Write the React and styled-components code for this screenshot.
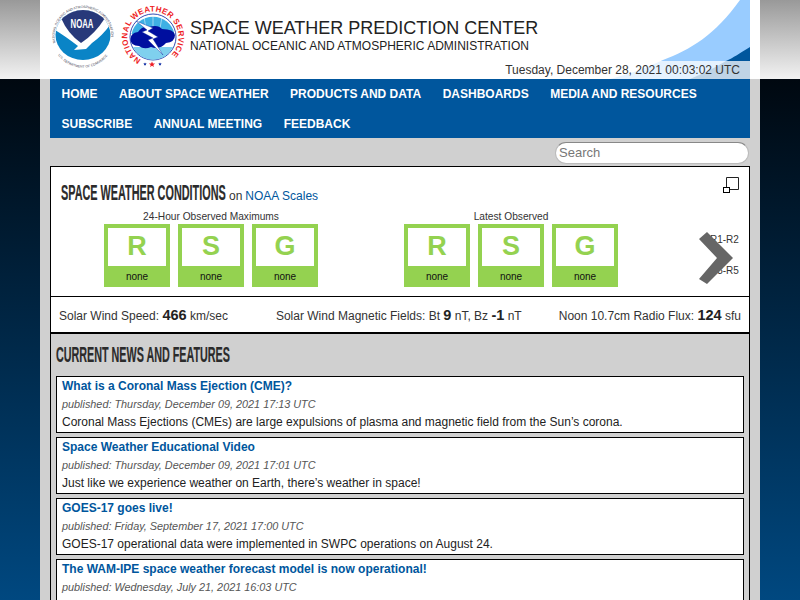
import React from 'react'
import styled, { createGlobalStyle } from 'styled-components'

const Global = createGlobalStyle`
  html, body { margin: 0; padding: 0; height: 600px; overflow: hidden; }
  body {
    font-family: "Liberation Sans", Arial, sans-serif;
    color: #222;
    background:
      linear-gradient(#999999, #f2f2f2) top / 100% 79px no-repeat,
      linear-gradient(#000810, #004880) bottom / 100% 521px no-repeat;
  }
`

const Page = styled.div`
  width: 720px;
  height: 600px;
  margin: 0 auto;
  background: #d0d0d0;
  overflow: hidden;
`

const Header = styled.header`
  position: relative;
  height: 79px;
  background: #fff;
  display: flex;
  align-items: flex-start;
  padding-left: 10px;
  box-sizing: border-box;
`

const Swoosh = styled.svg`
  position: absolute;
  right: 10px;
  top: 0;
`

const Logos = styled.div`
  display: flex;
  gap: 4px;
  padding-top: 4px;
  margin-right: 4px;
`

const Titles = styled.div`
  padding-top: 18px;
`

const SiteName = styled.div`
  font-size: 18px;
  line-height: 20px;
  color: #222;
`

const SiteOrg = styled.div`
  font-size: 12px;
  line-height: 17px;
  color: #222;
`

const DateBar = styled.div`
  position: absolute;
  right: 10px;
  bottom: 0;
  width: 250px;
  height: 18px;
  background: rgba(255, 255, 255, 0.75);
  font-size: 12px;
  line-height: 18px;
  text-align: right;
  padding-right: 10px;
  box-sizing: border-box;
  color: #333;
`

const Nav = styled.nav`
  margin: 0 10px;
  height: 59px;
  background: #00569d;
  display: flex;
  flex-wrap: wrap;
  align-content: flex-start;
  padding: 0 0.75px;
  box-sizing: border-box;
`

const NavItem = styled.a`
  color: #fff;
  font-weight: bold;
  font-size: 12px;
  line-height: 30px;
  padding: 0 10.75px;
  text-transform: uppercase;
`

const SearchRow = styled.div`
  height: 28px;
  margin: 0 10px;
  display: flex;
  justify-content: flex-end;
  align-items: center;
`

const SearchBox = styled.div`
  width: 194px;
  height: 22px;
  margin: 1px 1px 0 0;
  box-sizing: border-box;
  background: #fff;
  border: 1px solid #bbb;
  border-top-color: #888;
  border-radius: 11px;
  padding-left: 3px;
  font-size: 13px;
  line-height: 20px;
  color: #777;
`

const Panel = styled.section`
  margin: 0 10px;
  border: 1px solid #000;
  border-bottom: 2px solid #000;
  background: #fff;
`

const Conditions = styled.div`
  position: relative;
  height: 129px;
  border-bottom: 1px solid #000;
  overflow: hidden;
`

const PanelHead = styled.div`
  height: 43px;
  padding: 16px 0 0 10px;
  box-sizing: border-box;
  display: flex;
  align-items: baseline;
  font-size: 12px;
`

const Display = styled.h2`
  margin: 0;
  font-family: "Liberation Sans", sans-serif;
  font-weight: bold;
  font-size: 22px;
  line-height: 20px;
  color: #2b2b2b;
  -webkit-text-stroke: 0.2px #2b2b2b;
  text-transform: uppercase;
  white-space: nowrap;
  display: inline-block;
  flex: none;
  transform-origin: left center;
  transform: scaleX(${p => p.$scale});
  width: ${p => p.$width}px;
`

const Muted = styled.span`
  margin-left: 3px;
  color: #333;
`

const Link = styled.a`
  color: #00569d;
  margin-left: 3px;
`

const Groups = styled.div`
  display: flex;
  padding-left: 53px;
  gap: 86px;
`

const Group = styled.div`
  width: 214px;
`

const GroupLabel = styled.div`
  font-size: 10.2px;
  line-height: 14px;
  text-align: center;
  color: #333;
`

const Scales = styled.div`
  display: flex;
  gap: 8px;
`

const Scale = styled.div`
  width: 66px;
  height: 63px;
  box-sizing: border-box;
  border: 4px solid #94d250;
  border-bottom: 0;
  background: #94d250;
  display: flex;
  flex-direction: column;
`

const ScaleLetter = styled.div`
  height: 38px;
  background: #fff;
  color: #94d250;
  font-weight: bold;
  font-size: 27px;
  line-height: 37px;
  text-align: center;
`

const ScaleText = styled.div`
  flex: 1;
  font-size: 10px;
  line-height: 21px;
  text-align: center;
  color: #111;
`

const ResizeIcon = styled.svg`
  position: absolute;
  right: 10px;
  top: 10px;
`

const NextLabels = styled.div`
  position: absolute;
  left: 659px;
  top: 57px;
  width: 30px;
  height: 60px;
  overflow: hidden;
  font-size: 10px;
  line-height: 31px;
  white-space: nowrap;
  color: #333;
`

const Chevron = styled.svg`
  position: absolute;
  left: 648px;
  top: 65px;
`

const Stats = styled.div`
  height: 35px;
  display: flex;
  gap: 35px;
  align-items: center;
  padding: 0 8px;
  font-size: 12px;
  color: #333;
  white-space: nowrap;
`

const MiddleStat = styled.span`
  margin-left: 13px;
`

const LastStat = styled.span`
  margin-left: auto;
`

const Num = styled.b`
  font-size: 14.5px;
  color: #222;
`

const News = styled.section`
  margin: 0 10px;
  border-left: 1px solid #000;
  border-right: 1px solid #000;
  padding: 0 5px;
  height: 400px;
`

const NewsHead = styled.div`
  height: 42px;
  padding-top: 11px;
  box-sizing: border-box;
`

const Card = styled.article`
  height: 57px;
  margin-bottom: 4px;
  box-sizing: border-box;
  border: 1px solid #000;
  background: #fff;
  padding: 1px 5px 0;
`

const CardTitle = styled.a`
  display: block;
  color: #00569d;
  font-weight: bold;
  font-size: 12px;
  line-height: 17px;
`

const CardDate = styled.div`
  font-size: 10.85px;
  font-style: italic;
  color: #555;
  line-height: 19px;
`

const CardBody = styled.div`
  font-size: 12px;
  line-height: 16px;
  color: #222;
`

const NoaaLogo = () => (
  <svg width="66" height="66" viewBox="0 0 66 66">
    <defs>
      <path id="noaaTop" d="M5.5 39 A28.3 28.3 0 1 1 60.5 39" />
      <path id="noaaBot" d="M8 51 A31 31 0 0 0 58 51" />
      <clipPath id="noaaClip"><ellipse cx="33" cy="31" rx="27.5" ry="25" /></clipPath>
    </defs>
    <text fontSize="3.4" fill="#445"><textPath href="#noaaTop">NATIONAL OCEANIC AND ATMOSPHERIC ADMINISTRATION</textPath></text>
    <text fontSize="3.4" fill="#445"><textPath href="#noaaBot">U.S. DEPARTMENT OF COMMERCE</textPath></text>
    <g clipPath="url(#noaaClip)">
      <rect width="66" height="66" fill="#0a84c6" />
      <path d="M0 0 H66 V19 L60 21 Q52 32 42 39 L36 45 L24 46 L28 42 Q15 32 5 26 L0 26Z" fill="#fff" />
      <path d="M11 0 V14 Q18 30 31 39 Q45 30 55 14 V0Z" fill="#28397a" />
    </g>
    <text x="20.5" y="24" textLength="23" lengthAdjust="spacingAndGlyphs" fontSize="12" fontWeight="bold" fill="#fff">NOAA</text>
  </svg>
)

const NwsLogo = () => (
  <svg width="66" height="66" viewBox="0 0 66 66">
    <defs>
      <path id="nwsRing" d="M21 55.5 A25.5 25.5 0 1 1 45 55.5" />
    </defs>
    <text fontSize="8" fontWeight="bold" fill="#ee1c25" letterSpacing="0.3"><textPath href="#nwsRing">NATIONAL WEATHER SERVICE</textPath></text>
    <circle cx="33" cy="33" r="23" fill="#fff" stroke="#00209f" strokeWidth="0.8" />
    <path d="M11.5 30 A22 22 0 0 1 54.5 30Z" fill="#3fb0e4" />
    <path d="M24 13 L27 30 M33 11 L33 30 M42 13 L39 30" stroke="#fff" strokeWidth="0.5" />
    <path d="M13 43 A22 22 0 0 0 53 43Z" fill="#7fd0ee" />
    <path d="M10.5 35 Q10.5 29 18 28 Q22 22 29 23 Q38 20 42 25 Q54 25 55 31 Q55 38 46 39 Q40 46 31 43 Q24 46 19 42 Q10.5 42 10.5 35Z" fill="#000f9f" />
    <path d="M16 17 L33 24 L28 27 L38 33 L33 35 L43 51 L28 36 L33 34 L22 28 L27 26Z" fill="#fff" stroke="#00209f" strokeWidth="0.4" />
    <path d="M32 57.5 l.9 2.1 2.2 0 -1.8 1.3 .7 2.1 -2 -1.3 -2 1.3 .7 -2.1 -1.8 -1.3 2.2 0Z" fill="#ee1c25" />
    <path d="M25 58.5 l.5 1.1 1.2 0 -1 .8 .4 1.2 -1.1 -.7 -1.1 .7 .4 -1.2 -1 -.8 1.2 0Z" fill="#00209f" />
    <path d="M40 58.5 l.5 1.1 1.2 0 -1 .8 .4 1.2 -1.1 -.7 -1.1 .7 .4 -1.2 -1 -.8 1.2 0Z" fill="#00209f" />
  </svg>
)

const scales = ['R', 'S', 'G']

const ScaleGroup = ({ label }) => (
  <Group>
    <GroupLabel>{label}</GroupLabel>
    <Scales>
      {scales.map(s => (
        <Scale key={s}>
          <ScaleLetter>{s}</ScaleLetter>
          <ScaleText>none</ScaleText>
        </Scale>
      ))}
    </Scales>
  </Group>
)

const navItems = ['Home', 'About Space Weather', 'Products and Data', 'Dashboards', 'Media and Resources', 'Subscribe', 'Annual Meeting', 'Feedback']

const articles = [
  {
    title: 'What is a Coronal Mass Ejection (CME)?',
    date: 'published: Thursday, December 09, 2021 17:13 UTC',
    body: 'Coronal Mass Ejections (CMEs) are large expulsions of plasma and magnetic field from the Sun’s corona.',
  },
  {
    title: 'Space Weather Educational Video',
    date: 'published: Thursday, December 09, 2021 17:01 UTC',
    body: 'Just like we experience weather on Earth, there’s weather in space!',
  },
  {
    title: 'GOES-17 goes live!',
    date: 'published: Friday, September 17, 2021 17:00 UTC',
    body: 'GOES-17 operational data were implemented in SWPC operations on August 24.',
  },
  {
    title: 'The WAM-IPE space weather forecast model is now operational!',
    date: 'published: Wednesday, July 21, 2021 16:03 UTC',
    body: '',
  },
]

const App = () => (
  <Page>
    <Global />
    <Header>
      <Swoosh width="160" height="79" viewBox="0 0 160 79">
        <path d="M150 0 C125 35 100 50 73 60 C55 68 40 74 20 79 L160 79 L160 0Z" fill="#99ccff" />
        <path d="M160 47 C150 53 143 58 136 61 C125 68 112 74 100 79 L160 79Z" fill="#00569d" />
      </Swoosh>
      <Logos>
        <NoaaLogo />
        <NwsLogo />
      </Logos>
      <Titles>
        <SiteName>SPACE WEATHER PREDICTION CENTER</SiteName>
        <SiteOrg>NATIONAL OCEANIC AND ATMOSPHERIC ADMINISTRATION</SiteOrg>
      </Titles>
      <DateBar>Tuesday, December 28, 2021 00:03:02 UTC</DateBar>
    </Header>
    <Nav>
      {navItems.map(n => <NavItem key={n}>{n}</NavItem>)}
    </Nav>
    <SearchRow>
      <SearchBox>Search</SearchBox>
    </SearchRow>
    <Panel>
      <Conditions>
        <PanelHead>
          <Display $scale={0.493} $width={165}>Space Weather Conditions</Display>
          <Muted>on</Muted>
          <Link>NOAA Scales</Link>
        </PanelHead>
        <Groups>
          <ScaleGroup label="24-Hour Observed Maximums" />
          <ScaleGroup label="Latest Observed" />
        </Groups>
        <ResizeIcon width="16" height="16" viewBox="0 0 16 16">
          <path d="M3.5 .5 H15.5 V12.5 H3.5Z" fill="none" stroke="#222" />
          <rect x=".5" y="10.5" width="6" height="5" fill="#fff" stroke="#000" />
        </ResizeIcon>
        <NextLabels>R1-R2<br />R3-R5</NextLabels>
        <Chevron width="34" height="53" viewBox="0 0 34 53">
          <path d="M0 7 L8 0 L34 26 L8 52 L0 47 L18 26Z" fill="#666" />
        </Chevron>
      </Conditions>
      <Stats>
        <span>Solar Wind Speed: <Num>466</Num> km/sec</span>
        <MiddleStat>Solar Wind Magnetic Fields: Bt <Num>9</Num> nT, Bz <Num>-1</Num> nT</MiddleStat>
        <LastStat>Noon 10.7cm Radio Flux: <Num>124</Num> sfu</LastStat>
      </Stats>
    </Panel>
    <News>
      <NewsHead>
        <Display $scale={0.489} $width={175}>Current News and Features</Display>
      </NewsHead>
      {articles.map(a => (
        <Card key={a.title}>
          <CardTitle>{a.title}</CardTitle>
          <CardDate>{a.date}</CardDate>
          <CardBody>{a.body}</CardBody>
        </Card>
      ))}
    </News>
  </Page>
)

export default App
